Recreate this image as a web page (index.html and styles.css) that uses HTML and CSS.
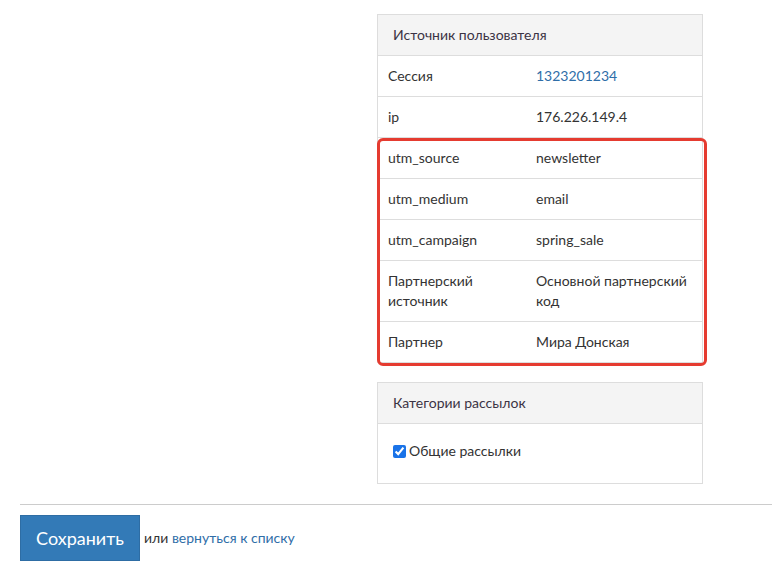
FILE: index.html
```html
<!DOCTYPE html>
<html lang="ru">
<head>
<meta charset="utf-8">
<link rel="stylesheet" href="styles.css">
</head>
<body>
<div class="page">
  <div class="columns">
    <div class="left"></div>
    <div class="right">
      <div class="panel">
        <div class="panel-heading">Источник пользователя</div>
        <div class="rows">
          <div class="row"><div class="k">Сессия</div><div class="v"><a href="#" class="link">1323201234</a></div></div>
          <div class="row"><div class="k">ip</div><div class="v">176.226.149.4</div></div>
          <div class="hl-group">
            <div class="row"><div class="k">utm_source</div><div class="v">newsletter</div></div>
            <div class="row"><div class="k">utm_medium</div><div class="v">email</div></div>
            <div class="row"><div class="k">utm_campaign</div><div class="v">spring_sale</div></div>
            <div class="row"><div class="k">Партнерский источник</div><div class="v">Основной партнерский код</div></div>
            <div class="row"><div class="k">Партнер</div><div class="v">Мира Донская</div></div>
            <div class="highlight"></div>
          </div>
        </div>
      </div>
      <div class="panel panel2">
        <div class="panel-heading">Категории рассылок</div>
        <div class="panel-body">
          <label class="check"><input type="checkbox" checked> Общие рассылки</label>
        </div>
      </div>
    </div>
  </div>
  <div class="actions">
    <button class="btn">Сохранить</button>
    <span class="or">или <a href="#" class="link">вернуться к списку</a></span>
  </div>
</div>
</body>
</html>
```
FILE: styles.css
```css
* { box-sizing: border-box; }
html, body { margin: 0; padding: 0; background: #fff; }
body {
  font-family: "Lato", "Liberation Sans", sans-serif;
  font-size: 14px;
  line-height: 20px;
  color: #333;
}
.page { padding-left: 20px; }
.columns {
  display: grid;
  grid-template-columns: 357px 326px;
  padding-top: 14px;
}
.panel {
  border: 1px solid #ddd;
  background: #fff;
}
.panel2 { margin-top: 19px; }
.panel-heading {
  background: #f4f4f4;
  border-bottom: 1px solid #ddd;
  padding: 10px 15px;
  height: 41px;
  color: #3b3344;
}
.rows { display: flex; flex-direction: column; }
.row {
  display: grid;
  grid-template-columns: 148px 1fr;
  padding: 10px 10px;
  border-top: 1px solid #ddd;
}
.rows > .row:first-child { border-top: none; }
.hl-group { position: relative; }
.highlight {
  position: absolute;
  left: -1px;
  top: 1px;
  right: -5px;
  bottom: -4px;
  border: 3px solid #e53b30;
  border-radius: 6px;
  pointer-events: none;
}
.link { color: #2f6ea8; text-decoration: none; }
.panel-body { padding: 17px 15px 19px; height: 59px; }
.check { display: flex; align-items: center; gap: 3px; }
.check input { margin: 0; width: 13px; height: 13px; accent-color: #1a73e8; }
.actions {
  margin-top: 20px;
  border-top: 1px solid #ccc;
  padding-top: 10px;
  display: flex;
  align-items: center;
  gap: 4px;
}
.btn {
  background: #337ab7;
  border: 1px solid #2e6da4;
  color: #fff;
  font-family: inherit;
  font-size: 18px;
  width: 120px;
  height: 46px;
  padding: 0;
  border-radius: 0;
}
.or { color: #333; font-size: 14px; }
```
